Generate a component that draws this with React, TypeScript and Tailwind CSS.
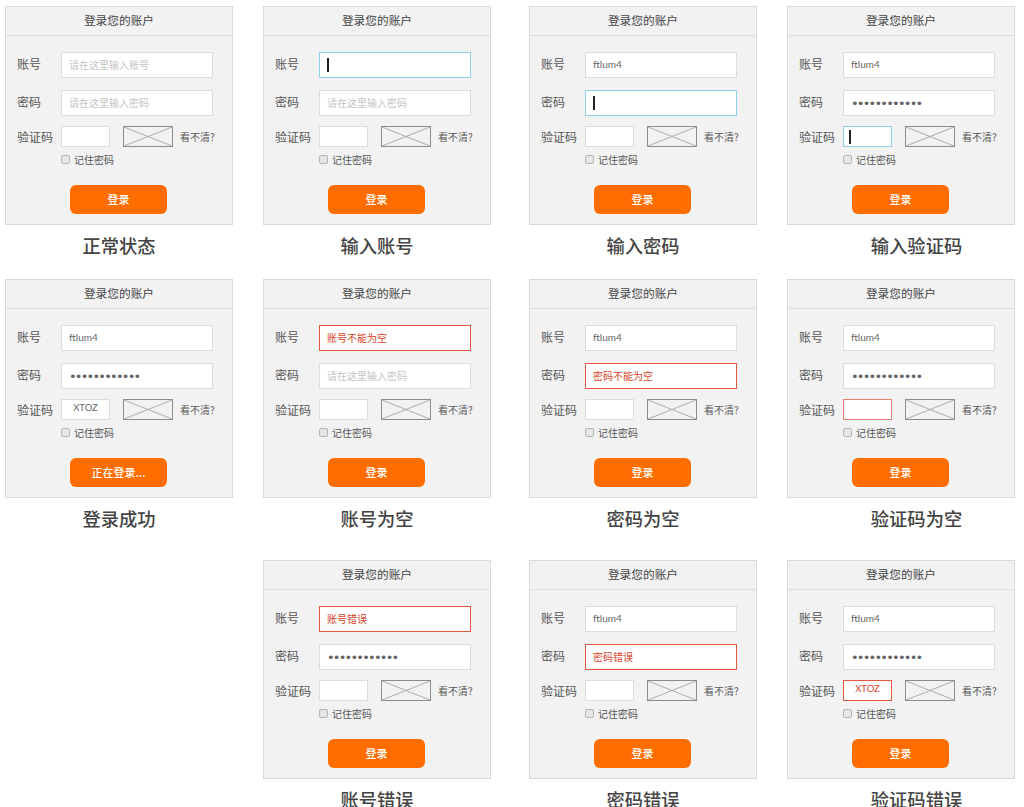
const FONT = "font-['Noto_Sans_CJK_SC','Liberation_Sans',sans-serif]";

type Tone = "normal" | "focus" | "error" | "soft";

type FieldState = {
  value?: string;
  placeholder?: string;
  tone?: Tone;
  cursor?: boolean;
  dots?: boolean;
};

type CardState = {
  caption: string;
  account: FieldState;
  password: FieldState;
  code: FieldState;
  button?: string;
};

const ACCOUNT_PH = "请在这里输入账号";
const PASSWORD_PH = "请在这里输入密码";
const NAME = "ftlum4";
const DOTS = "••••••••••••";

const toneClass: Record<Tone, string> = {
  normal: "border-[#dcdcdc]",
  focus: "border-[#8fd0e8]",
  error: "border-[#e2583e]",
  soft: "border-[#e8806c]",
};

function Field({ state, small }: { state: FieldState; small?: boolean }) {
  const tone = state.tone ?? "normal";
  const size = small
    ? `w-[49px] h-[21px] ${state.cursor ? "pl-[5px]" : "justify-center"}`
    : "w-[152px] h-[26px] px-[7px]";
  return (
    <div className={`flex items-center bg-white border ${toneClass[tone]} ${size}`}>
      {state.cursor && <span className="w-[2px] h-[14px] bg-[#222]" />}
      {state.dots && (
        <span className="font-['DejaVu_Sans',sans-serif] text-[13px] leading-none tracking-[-1.8px] text-[#666]">
          {DOTS}
        </span>
      )}
      {state.value && (
        <span
          className={`pb-[2px] font-['Lato',sans-serif] ${small ? "text-[9.5px]" : "text-[10px]"} ${
            tone === "error" ? "text-[#d9432a]" : "text-[#666]"
          }`}
        >
          {state.value}
        </span>
      )}
      {state.placeholder && (
        <span className={`pb-[2px] text-[10px] ${tone === "error" ? "text-[#d9432a]" : "text-[#c4c4c4]"}`}>
          {state.placeholder}
        </span>
      )}
    </div>
  );
}

function CaptchaImage() {
  return (
    <svg width="50" height="21" viewBox="0 0 50 21" className="shrink-0">
      <rect x="0.5" y="0.5" width="49" height="20" fill="none" stroke="#8c8c8c" />
      <path d="M1 1 L49 20 M49 1 L1 20" stroke="#9a9a9a" strokeWidth="0.8" fill="none" />
    </svg>
  );
}

function LoginCard({ state, shiftCaption }: { state: CardState; shiftCaption?: boolean }) {
  return (
    <div className="w-[228px]">
      <div className={`h-[219px] bg-[#f2f2f2] border border-[#d9d9d9] ${FONT}`}>
        <div className="h-[29px] pb-[2px] flex items-center justify-center border-b border-[#dedede] text-[11.7px] text-[#444]">
          登录您的账户
        </div>
        <div className="pt-[16px] pl-[11px]">
          <div className="flex items-center h-[26px]">
            <span className="w-[44px] pb-[2px] text-[12px] text-[#555]">账号</span>
            <Field state={state.account} />
          </div>
          <div className="flex items-center h-[26px] mt-[12px]">
            <span className="w-[44px] pb-[2px] text-[12px] text-[#555]">密码</span>
            <Field state={state.password} />
          </div>
          <div className="flex items-center h-[21px] mt-[10px]">
            <span className="w-[44px] text-[12px] text-[#555] whitespace-nowrap">验证码</span>
            <Field state={state.code} small />
            <span className="ml-[13px]">
              <CaptchaImage />
            </span>
            <span className="ml-[7px] text-[10px] text-[#555] whitespace-nowrap">看不清?</span>
          </div>
          <div className="flex items-center h-[14px] mt-[5px] ml-[44px] gap-[4px]">
            <span className="w-[9px] h-[9px] rounded-[2px] border border-[#b5b5b5] bg-[#e6e6e6]" />
            <span className="text-[10px] text-[#555]">记住密码</span>
          </div>
          <button
            type="button"
            className="block mt-[19px] ml-[53px] w-[97px] h-[29px] rounded-[6px] bg-[#ff6d00] text-white text-[11px] font-medium"
          >
            {state.button ?? "登录"}
          </button>
        </div>
      </div>
      <div
        className={`mt-[8px] text-center text-[18.3px] leading-[24px] font-medium text-[#444] ${FONT} ${
          shiftCaption ? "pl-[31px]" : ""
        }`}
      >
        {state.caption}
      </div>
    </div>
  );
}

const empty: FieldState = {};
const accountPh: FieldState = { placeholder: ACCOUNT_PH };
const passwordPh: FieldState = { placeholder: PASSWORD_PH };
const name: FieldState = { value: NAME };
const dots: FieldState = { dots: true };

const row1: CardState[] = [
  { caption: "正常状态", account: accountPh, password: passwordPh, code: empty },
  { caption: "输入账号", account: { tone: "focus", cursor: true }, password: passwordPh, code: empty },
  { caption: "输入密码", account: name, password: { tone: "focus", cursor: true }, code: empty },
  { caption: "输入验证码", account: name, password: dots, code: { tone: "focus", cursor: true } },
];

const row2: CardState[] = [
  { caption: "登录成功", account: name, password: dots, code: { value: "XTOZ" }, button: "正在登录..." },
  {
    caption: "账号为空",
    account: { placeholder: "账号不能为空", tone: "error" },
    password: passwordPh,
    code: empty,
  },
  {
    caption: "密码为空",
    account: name,
    password: { placeholder: "密码不能为空", tone: "error" },
    code: empty,
  },
  { caption: "验证码为空", account: name, password: dots, code: { tone: "soft" } },
];

const row3: CardState[] = [
  { caption: "账号错误", account: { placeholder: "账号错误", tone: "error" }, password: dots, code: empty },
  { caption: "密码错误", account: name, password: { placeholder: "密码错误", tone: "error" }, code: empty },
  { caption: "验证码错误", account: name, password: dots, code: { value: "XTOZ", tone: "error" } },
];

export default function App() {
  return (
    <div className="w-[1024px] h-[807px] overflow-hidden bg-white pl-[5px] pt-[6px]">
      <div className="grid grid-cols-[258px_266px_258px_228px] auto-rows-[273px]">
        {row1.map((s, i) => (
          <LoginCard key={s.caption} state={s} shiftCaption={i === 3} />
        ))}
        {row2.map((s, i) => (
          <LoginCard key={s.caption} state={s} shiftCaption={i === 3} />
        ))}
        <div className="mt-[8px]" />
        {row3.map((s, i) => (
          <div key={s.caption} className="mt-[8px]">
            <LoginCard state={s} shiftCaption={i === 2} />
          </div>
        ))}
      </div>
    </div>
  );
}
